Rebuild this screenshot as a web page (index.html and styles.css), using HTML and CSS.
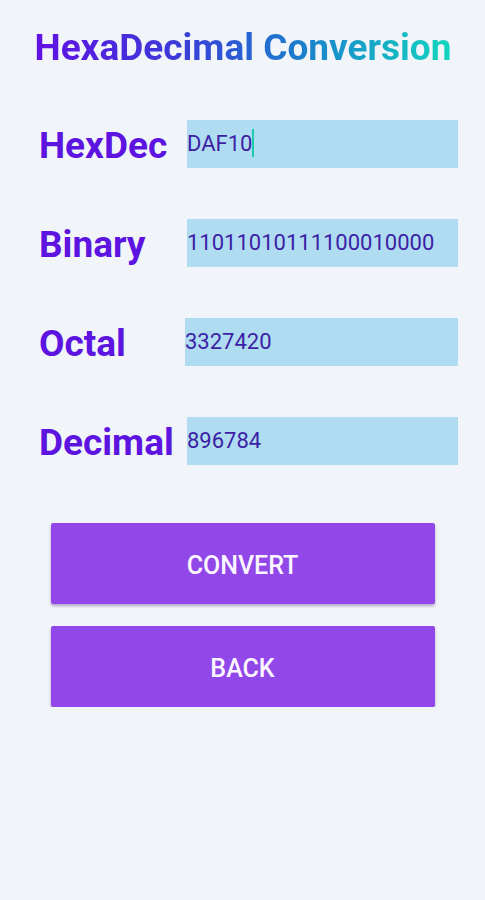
FILE: index.html
```html
<!DOCTYPE html>
<html>
	<head>
		<title>HexaDecimal Conversion</title>
		<meta charset="utf-8">
		<meta name="viewport" content="width=device-width, initial-scale=1">
		<link rel="stylesheet" href="styles.css">
	</head>
	<body>
		<div class="main">
			<h1 class="title">HexaDecimal Conversion</h1>
			<div class="rows">
				<div class="row">
					<label class="label">HexDec</label>
					<div class="field">DAF10<span class="caret"></span></div>
				</div>
				<div class="row">
					<label class="label">Binary</label>
					<div class="field">11011010111100010000</div>
				</div>
				<div class="row row_octal">
					<label class="label">Octal</label>
					<div class="field">3327420</div>
				</div>
				<div class="row">
					<label class="label">Decimal</label>
					<div class="field">896784</div>
				</div>
			</div>
			<div class="buttons">
				<button class="btn">Convert</button>
				<button class="btn">Back</button>
			</div>
		</div>
	</body>
</html>
```

FILE: styles.css
```css
html{
	font-family: Roboto, 'Noto Sans', sans-serif;
}
body{
	margin: 0;
	background-color: #f1f4f9;
}
.main{
	padding-top: 26px;
}
.title{
	margin: 0;
	text-align: center;
	font-size: 37px;
	font-weight: 700;
	line-height: 44px;
	background: linear-gradient(90deg, #6210e4 0%, #3a3cd8 35%, #1a82cc 65%, #12d6bf 100%);
	-webkit-background-clip: text;
	background-clip: text;
	color: transparent;
	width: 418px;
	margin-left: 34px;
	white-space: nowrap;
}
.rows{
	margin-top: 50px;
	display: flex;
	flex-direction: column;
	gap: 51px;
}
.row{
	display: grid;
	grid-template-columns: 148px 271px;
	align-items: center;
	padding-left: 39px;
	height: 48px;
}
.row_octal .field{
	margin-left: -2px;
}
.label{
	font-size: 37px;
	font-weight: 700;
	color: #5d14e0;
	white-space: nowrap;
	padding-top: 2px;
}
.field{
	height: 48px;
	line-height: 48px;
	background-color: #afdcf0;
	color: #3c1fa6;
	font-size: 22px;
	white-space: nowrap;
}
.caret{
	display: inline-block;
	width: 2px;
	height: 28px;
	background-color: #1fc9b0;
	vertical-align: -6px;
}
.buttons{
	margin: 58px auto 0;
	width: 384px;
	display: flex;
	flex-direction: column;
	gap: 22px;
}
.btn{
	height: 81px;
	padding-top: 4px;
	border: none;
	border-radius: 2px;
	background-color: #9247e8;
	color: #fbf6ff;
	font-family: Roboto, sans-serif;
	font-size: 25px;
	font-weight: 500;
	text-transform: uppercase;
	box-shadow: 0 2px 3px rgba(60, 20, 110, 0.35);
}
```
